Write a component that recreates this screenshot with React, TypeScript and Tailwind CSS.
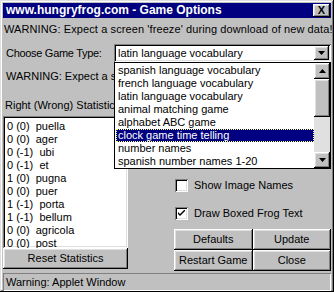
import React from 'react';

const games = [
  'spanish language vocabulary',
  'french language vocabulary',
  'latin language vocabulary',
  'animal matching game',
  'alphabet ABC game',
  'clock game time telling',
  'number names',
  'spanish number names 1-20',
];

const stats = [
  '0 (0)  puella',
  '0 (0)  ager',
  '0 (-1)  ubi',
  '0 (-1)  et',
  '1 (0)  pugna',
  '0 (0)  puer',
  '1 (-1)  porta',
  '1 (-1)  bellum',
  '0 (0)  agricola',
  '0 (0)  post',
];

// classic 3d bevels
const raised =
  'bg-[#c0c0c0] shadow-[inset_-1px_-1px_0_#000,inset_1px_1px_0_#fff,inset_-2px_-2px_0_#808080,inset_2px_2px_0_#dfdfdf]';
const sunken =
  'bg-white shadow-[inset_1px_1px_0_#808080,inset_-1px_-1px_0_#fff,inset_2px_2px_0_#000,inset_-2px_-2px_0_#dfdfdf]';

const Arrow = ({ up }: { up?: boolean }) => (
  <svg width="7" height="4" viewBox="0 0 7 4" className="block">
    {up ? <path d="M3.5 0 L7 4 L0 4 Z" fill="#000" /> : <path d="M0 0 L7 0 L3.5 4 Z" fill="#000" />}
  </svg>
);

const Button = ({ label, className = '' }: { label: string; className?: string }) => (
  <div className={`${raised} flex items-center justify-center h-[21px] ${className}`}>{label}</div>
);

const Checkbox = ({ label, checked }: { label: string; checked?: boolean }) => (
  <div className="flex items-center gap-[6px] h-[13px]">
    <div className={`${sunken} w-[13px] h-[13px] flex items-center justify-center`}>
      {checked && (
        <svg width="7" height="7" viewBox="0 0 7 7" className="block">
          <path d="M0 2 L0 4 L2 6 L7 1 L7 -1 L2 4 Z" fill="#000" />
        </svg>
      )}
    </div>
    <span>{label}</span>
  </div>
);

export default function App() {
  return (
    <div className="w-[334px] h-[292px] bg-[#c0c0c0] p-[3px] flex flex-col font-['Liberation_Sans',Arial,sans-serif] text-[11px] text-black leading-[13px] shadow-[inset_-1px_-1px_0_#000,inset_1px_1px_0_#dfdfdf,inset_-2px_-2px_0_#808080,inset_2px_2px_0_#fff] overflow-hidden">
      {/* title bar */}
      <div className="h-[15px] bg-[#000080] flex items-center justify-between pl-[3px] pr-[1px] shrink-0">
        <span className="text-white font-bold text-[12px] leading-[15px]">www.hungryfrog.com - Game Options</span>
        <div className={`${raised} w-[17px] h-[13px] flex items-center justify-center text-[11px] font-bold leading-none`}>
          X
        </div>
      </div>

      {/* body */}
      <div className="relative flex-1 flex flex-col">
        <div className="mt-[5px] h-[14px] pl-[1px] whitespace-nowrap tracking-[0.1px]">
          WARNING: Expect a screen 'freeze' during download of new data!
        </div>

        <div className="mt-[7px] h-[18px] flex items-center">
          <span className="w-[111px] pl-[3px] pt-[1px] tracking-[-0.3px]">Choose Game Type:</span>
          <div className={`${sunken} flex-1 h-[18px] flex items-center justify-between pl-[4px] pr-[2px]`}>
            <span>latin language vocabulary</span>
            <div className={`${raised} w-[15px] h-[14px] flex items-center justify-center`}>
              <Arrow />
            </div>
          </div>
        </div>

        <div className="mt-[8px] h-[14px] w-[111px] pl-[3px] whitespace-nowrap overflow-hidden">
          WARNING: Expect a slow download on a dial-up connection.
        </div>

        <div className="mt-[15px] h-[14px] w-[111px] pl-[2px] whitespace-nowrap overflow-hidden">
          Right (Wrong) Statistics
        </div>

        <div className="mt-[3px] flex flex-1">
          {/* left column */}
          <div className="w-[125px] flex flex-col">
            <div className={`${sunken} h-[132px] pt-[4px] pl-[4px]`}>
              {stats.map((s) => (
                <div key={s} className="h-[13px] whitespace-pre">
                  {s}
                </div>
              ))}
            </div>
            <Button label="Reset Statistics" />
          </div>

          {/* right column */}
          <div className="flex-1 flex flex-col pl-[46px] pt-[63px]">
            <div className="pl-[1px]">
              <Checkbox label="Show Image Names" />
            </div>
            <div className="mt-[15px] pl-[1px]">
              <Checkbox label="Draw Boxed Frog Text" checked />
            </div>
            <div className="mt-[9px] grid grid-cols-2">
              <Button label="Defaults" />
              <Button label="Update" />
              <Button label="Restart Game" />
              <Button label="Close" />
            </div>
          </div>
        </div>

        {/* open dropdown list */}
        <div className="absolute left-[111px] top-[44px] w-[217px] h-[107px] bg-white border border-black flex">
          <div className="flex-1 pt-[1px] pl-[1px]">
            {games.map((g) => (
              <div
                key={g}
                className={
                  g === 'clock game time telling'
                    ? 'h-[13px] pl-[2px] bg-[#000080] text-white outline-1 outline-dotted outline-[#ffff80] -outline-offset-1'
                    : 'h-[13px] pl-[2px]'
                }
              >
                {g}
              </div>
            ))}
          </div>
          <div className="w-[16px] flex flex-col bg-[#e0e0e0]">
            <div className={`${raised} h-[16px] flex items-center justify-center`}>
              <Arrow up />
            </div>
            <div className={`${raised} h-[38px]`} />
            <div className="flex-1" />
            <div className={`${raised} h-[16px] flex items-center justify-center`}>
              <Arrow />
            </div>
          </div>
        </div>
      </div>

      {/* status bar */}
      <div className="h-[18px] mt-[2px] flex items-center pl-[3px] shrink-0 shadow-[inset_1px_1px_0_#808080,inset_-1px_-1px_0_#fff]">
        Warning: Applet Window
      </div>
    </div>
  );
}
